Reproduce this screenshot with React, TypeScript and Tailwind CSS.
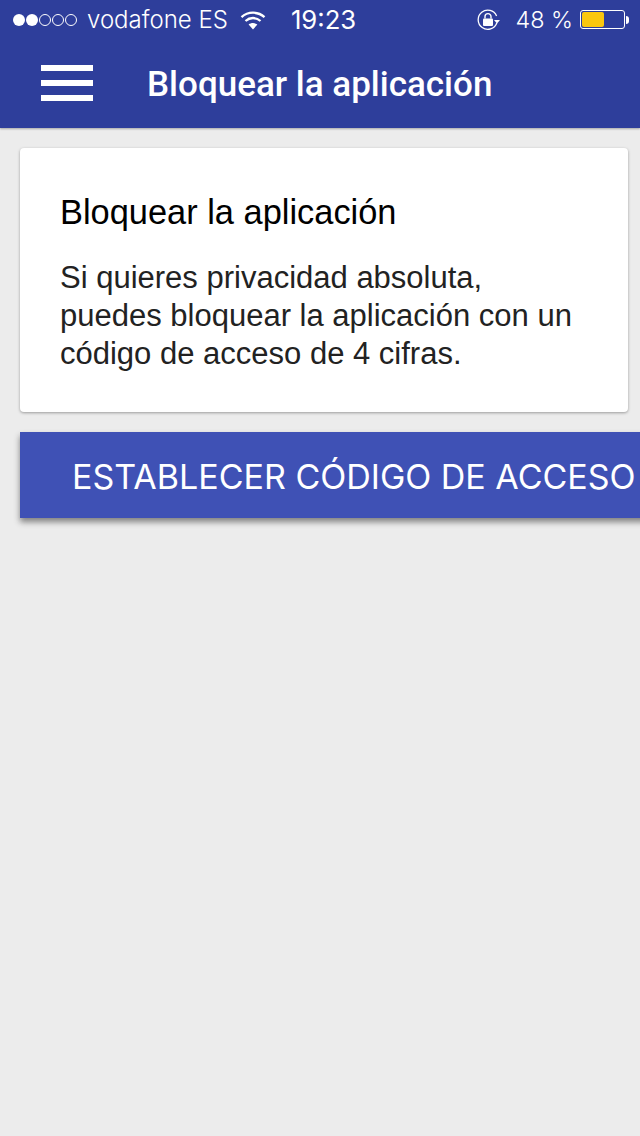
import React from 'react';

function SignalDots() {
    return (
        <div className="flex items-center gap-[1px]">
            {[0, 1].map(i => <span key={i} className="w-[12px] h-[12px] rounded-full bg-white"/>)}
            {[2, 3, 4].map(i => <span key={i} className="w-[12px] h-[12px] rounded-full border border-white"/>)}
        </div>
    );
}

function WifiIcon() {
    return (
        <svg width="26" height="20" viewBox="0 0 26 20" fill="none" stroke="white" strokeWidth="2.3">
            <path d="M1.5 7.2 C8 1.2 18 1.2 24.5 7.2"/>
            <path d="M5.5 11 C10 7 16 7 20.5 11"/>
            <path d="M13 19.4 L8.6 14.6 C11.2 12.6 14.8 12.6 17.4 14.6 Z" fill="white" stroke="none"/>
        </svg>
    );
}

function RotationLockIcon() {
    return (
        <svg width="24" height="22" viewBox="0 0 24 22" fill="none">
            <path d="M19.6 7 A9.6 9.6 0 1 0 19.8 14" stroke="white" strokeWidth="1.3"/>
            <path d="M17 11 H23 L20 14.4 Z" fill="white"/>
            <rect x="6" y="9.5" width="10" height="7.5" rx="1" fill="white"/>
            <path d="M8 9.5 V7.6 A3 3 0 0 1 14 7.6 V9.5" stroke="white" strokeWidth="1.4"/>
        </svg>
    );
}

function BatteryIcon() {
    return (
        <div className="flex items-center">
            <div className="w-[45px] h-[19px] rounded-[3px] border border-white p-[1px]">
                <div className="w-[22px] h-full rounded-[2px] bg-[#fac70e]"/>
            </div>
            <div className="w-[3px] h-[8px] ml-[1px] rounded-r-sm bg-white"/>
        </div>
    );
}

function StatusBar() {
    return (
        <div className="flex items-center justify-between h-[40px] pl-[13px] pr-[11px] text-white text-[24px] font-['Inter',sans-serif] font-light">
            <div className="flex items-center">
                <SignalDots/>
                <span className="ml-[10px]">vodafone ES</span>
                <span className="ml-[12px]"><WifiIcon/></span>
                <span className="ml-[25px] text-[25.7px] font-normal">19:23</span>
            </div>
            <div className="flex items-center">
                <RotationLockIcon/>
                <span className="ml-[14px] mr-[7px] text-[23.4px]">48 %</span>
                <BatteryIcon/>
            </div>
        </div>
    );
}

function MenuIcon() {
    return (
        <div className="flex flex-col gap-[9px] w-[52px] mb-[2px]">
            <span className="block h-[6px] bg-white"/>
            <span className="block h-[6px] bg-white"/>
            <span className="block h-[6px] bg-white"/>
        </div>
    );
}

function App() {
    return (
        <div className="flex flex-col w-[640px] h-[1136px] overflow-hidden bg-[#ececec]">
            <header className="bg-[#2e3e9b] h-[128px] shadow-[0_1px_2px_rgba(0,0,0,0.3)]">
                <StatusBar/>
                <div className="flex items-center h-[88px] pl-[41px]">
                    <MenuIcon/>
                    <h1 className="ml-[54px] mt-[2px] text-white text-[35px] font-medium font-['Roboto',sans-serif]">Bloquear la aplicación</h1>
                </div>
            </header>

            <main className="flex flex-col gap-[20px] pt-[20px] pl-[20px]">
                <section className="w-[608px] h-[264px] px-[40px] pt-[44px] rounded-[4px] bg-white shadow-[0_1px_3px_rgba(0,0,0,0.35)] font-['Liberation_Sans',sans-serif] text-black">
                    <h2 className="text-[34.4px] leading-[40px]">Bloquear la aplicación</h2>
                    <p className="mt-[27px] text-[31px] leading-[38px] text-[#222]">
                        Si quieres privacidad absoluta,<br/>
                        puedes bloquear la aplicación con un<br/>
                        código de acceso de 4 cifras.
                    </p>
                </section>

                <button className="w-[640px] h-[86px] pl-[52px] pt-[2px] text-left whitespace-nowrap bg-[#3f51b5] text-white text-[34px] font-['Inter',sans-serif] shadow-[0_4px_6px_rgba(0,0,0,0.45)]">
                    ESTABLECER CÓDIGO DE ACCESO
                </button>
            </main>
        </div>
    );
}

export default App;
